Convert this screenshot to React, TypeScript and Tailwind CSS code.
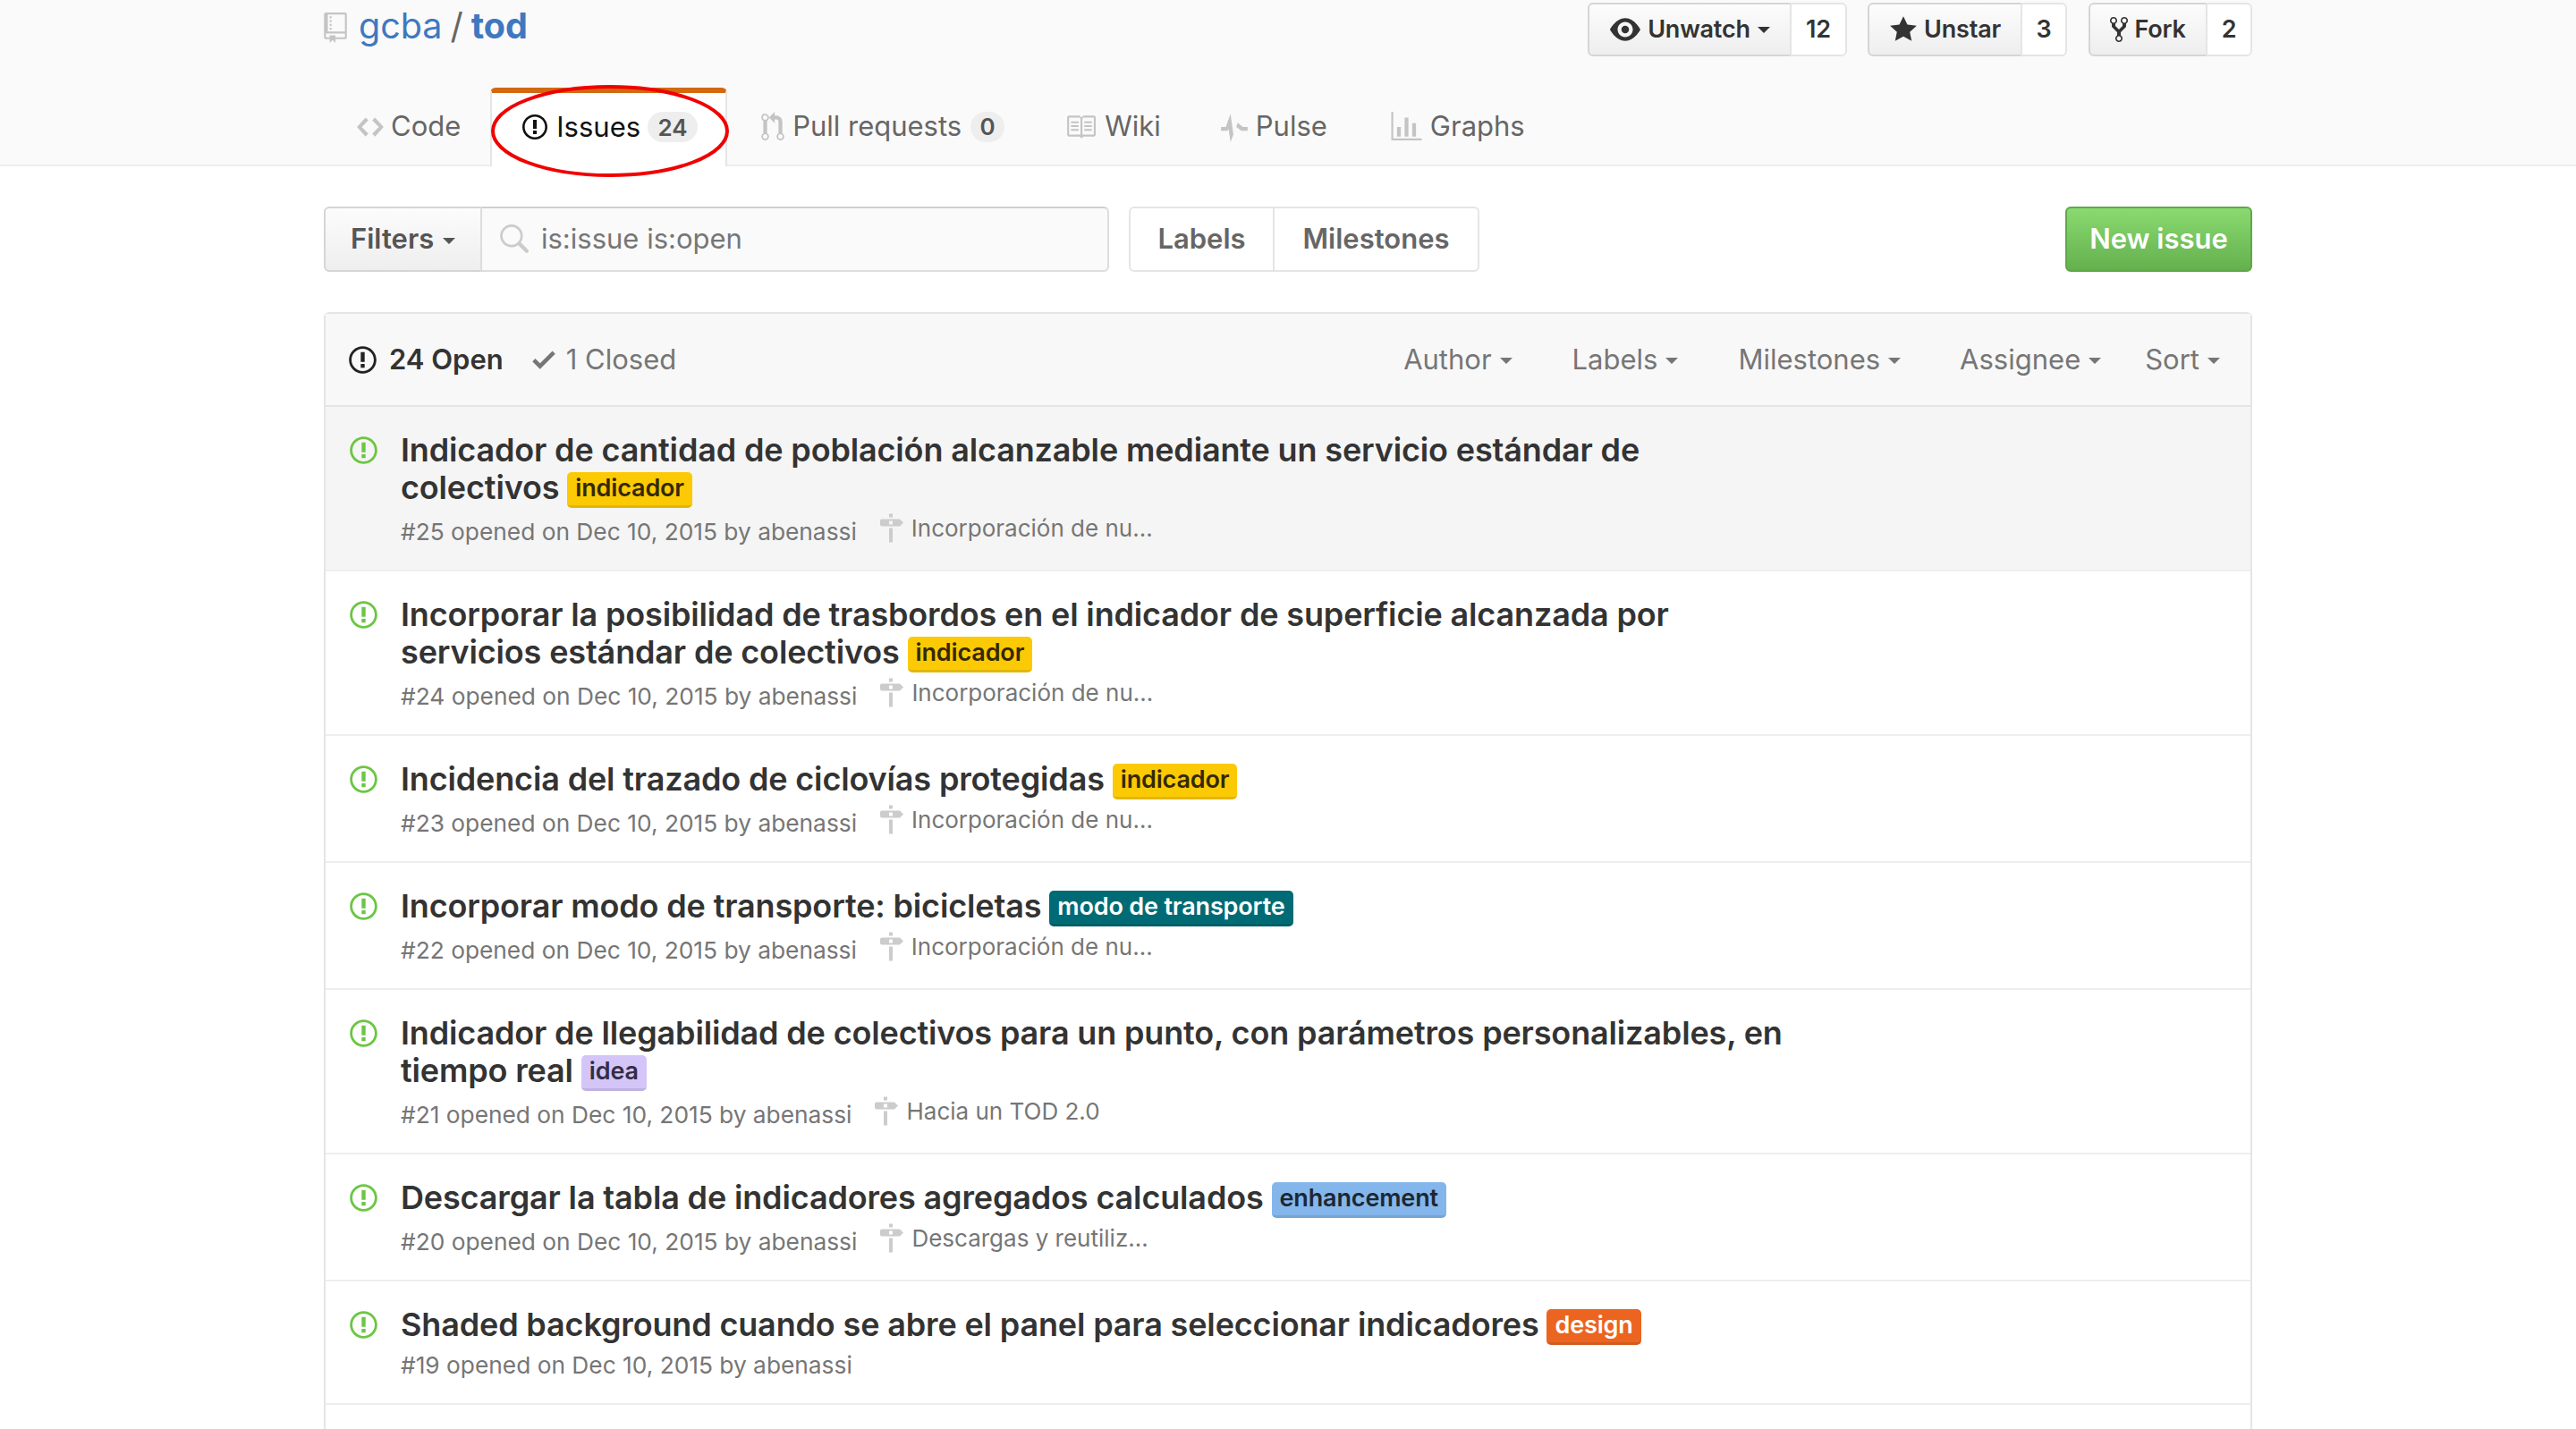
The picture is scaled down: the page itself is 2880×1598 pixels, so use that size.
import React from "react";

const P = {
  issue: "M7 2.3c3.14 0 5.7 2.56 5.7 5.7s-2.56 5.7-5.7 5.7A5.71 5.71 0 0 1 1.3 8c0-3.14 2.56-5.7 5.7-5.7zM7 1C3.14 1 0 4.14 0 8s3.14 7 7 7 7-3.14 7-7-3.14-7-7-7zm1 3H6v5h2V4zm0 6H6v2h2v-2z",
  code: "M9.5 3L8 4.5 11.5 8 8 11.5 9.5 13 14 8 9.5 3zm-5 0L0 8l4.5 5L6 11.5 2.5 8 6 4.5 4.5 3z",
  pr: "M11 11.28V5c-.03-.78-.34-1.47-.94-2.06C9.46 2.35 8.78 2.03 8 2H7V0L4 3l3 3V4h1c.27.02.48.11.69.31.21.2.3.42.31.69v6.28A1.993 1.993 0 0 0 10 15a1.993 1.993 0 0 0 1-3.72zm-1 2.92c-.66 0-1.2-.55-1.2-1.2 0-.65.55-1.2 1.2-1.2.65 0 1.2.55 1.2 1.2 0 .65-.55 1.2-1.2 1.2zM4 3c0-1.11-.89-2-2-2a1.993 1.993 0 0 0-1 3.72v6.56A1.993 1.993 0 0 0 2 15a1.993 1.993 0 0 0 1-3.72V4.72c.59-.34 1-.98 1-1.72zm-.8 10c0 .66-.55 1.2-1.2 1.2-.65 0-1.2-.55-1.2-1.2 0-.65.55-1.2 1.2-1.2.65 0 1.2.55 1.2 1.2zM2 4.2C1.34 4.2.8 3.65.8 3c0-.65.55-1.2 1.2-1.2.65 0 1.2.55 1.2 1.2 0 .65-.55 1.2-1.2 1.2z",
  book: "M3 5h4v1H3V5zm0 3h4V7H3v1zm0 2h4V9H3v1zm11-5h-4v1h4V5zm0 2h-4v1h4V7zm0 2h-4v1h4V9zm2-6v9c0 .55-.45 1-1 1H9.5l-1 1-1-1H2c-.55 0-1-.45-1-1V3c0-.55.45-1 1-1h5.5l1 1 1-1H15c.55 0 1 .45 1 1zm-8 .5L7.5 3H2v9h6V3.5zm7-.5H9.5l-.5.5V12h6V3z",
  repo: "M4 9H3V8h1v1zm0-3H3v1h1V6zm0-2H3v1h1V4zm0-2H3v1h1V2zm8-1v12c0 .55-.45 1-1 1H6v2l-1.5-1.5L3 16v-2H1c-.55 0-1-.45-1-1V1c0-.55.45-1 1-1h10c.55 0 1 .45 1 1zm-1 10H1v2h2v-1h3v1h5v-2zm0-10H2v9h9V1z",
  pulse: "M11.5 8L8.8 5.8 6.5 12 5 1 2.5 8H0v2h3.5l.5-1 1 7 3-8 2.7 2H14V8z",
  graph: "M16 14v1H0V0h1v14h15zM5 13H3V8h2v5zm4 0H7V3h2v10zm4 0h-2V6h2v7z",
  eye: "M8.06 2C3 2 0 8 0 8s3 6 8.06 6C13 14 16 8 16 8s-3-6-7.94-6zM8 12c-2.2 0-4-1.78-4-4 0-2.2 1.8-4 4-4 2.22 0 4 1.8 4 4 0 2.22-1.78 4-4 4zm2-4c0 1.11-.89 2-2 2-1.11 0-2-.89-2-2 0-1.11.89-2 2-2 1.11 0 2 .89 2 2z",
  star: "M14 6l-4.9-.64L7 1 4.9 5.36 0 6l3.6 3.26L2.67 14 7 11.67 11.33 14l-.93-4.74L14 6z",
  fork: "M8 1a1.993 1.993 0 0 0-1 3.72V6L5 8 3 6V4.72A1.993 1.993 0 0 0 2 1a1.993 1.993 0 0 0-1 3.72V6.5l3 3v1.78A1.993 1.993 0 0 0 5 15a1.993 1.993 0 0 0 1-3.72V9.5l3-3V4.72A1.993 1.993 0 0 0 8 1zM2 4.2C1.34 4.2.8 3.65.8 3c0-.65.55-1.2 1.2-1.2.65 0 1.2.55 1.2 1.2 0 .65-.55 1.2-1.2 1.2zm3 10c-.66 0-1.2-.55-1.2-1.2 0-.65.55-1.2 1.2-1.2.65 0 1.2.55 1.2 1.2 0 .65-.55 1.2-1.2 1.2zm3-10c-.66 0-1.2-.55-1.2-1.2 0-.65.55-1.2 1.2-1.2.65 0 1.2.55 1.2 1.2 0 .65-.55 1.2-1.2 1.2z",
  milestone: "M8 2H6V0h2v2zm4 5H2c-.55 0-1-.45-1-1V4c0-.55.45-1 1-1h10l2 2-2 2zM8 4H6v2h2V4zM6 16h2V8H6v8z",
  check: "M12 5l-8 8-4-4 1.5-1.5L4 10l6.5-6.5L12 5z",
  search: "M15.7 13.3l-3.81-3.83A5.93 5.93 0 0 0 13 6c0-3.31-2.69-6-6-6S1 2.69 1 6s2.69 6 6 6c1.3 0 2.48-.41 3.47-1.11l3.83 3.81c.19.2.45.3.7.3.25 0 .52-.09.7-.3a.996.996 0 0 0 0-1.41v.01zM7 10.7c-2.59 0-4.7-2.11-4.7-4.7 0-2.59 2.11-4.7 4.7-4.7 2.59 0 4.7 2.11 4.7 4.7 0 2.59-2.11 4.7-4.7 4.7z",
};

function Oct({ d, vw, cls }: { d: string; vw: number; cls: string }) {
  return (
    <svg viewBox={`0 0 ${vw} 16`} className={cls} fill="currentColor" aria-hidden="true">
      <path fillRule="evenodd" d={d} />
    </svg>
  );
}

function Caret({ cls }: { cls: string }) {
  return <span className={`inline-block w-0 h-0 border-x-[7px] border-x-transparent border-t-[7px] ${cls}`} />;
}

function Social({ icon, vw, iconCls, label, count, caret, w, cw }: { icon: string; vw: number; iconCls: string; label: string; count: string; caret?: boolean; w: string; cw: string }) {
  return (
    <div className="flex h-[60px] text-[27px] font-semibold text-[#333] tracking-[-0.2px]">
      <div className={`flex items-center justify-center gap-[7px] ${w} rounded-l-[6px] border-2 border-[#d5d5d5] bg-gradient-to-b from-[#fcfcfc] to-[#eeeeee]`}>
        <Oct d={icon} vw={vw} cls={iconCls} />
        <span>{label}</span>
        {caret && <Caret cls="border-t-[#333] ml-[1px]" />}
      </div>
      <div className={`flex items-center justify-center ${cw} -ml-[2px] rounded-r-[6px] border-2 border-[#e5e5e5] bg-white`}>{count}</div>
    </div>
  );
}

function Tab({ icon, vw, iconCls, label, count, pad }: { icon: string; vw: number; iconCls: string; label: string; count?: string; pad: string }) {
  return (
    <div className={`flex items-center h-[87px] text-[31px] text-[#666] ${pad}`}>
      <Oct d={icon} vw={vw} cls={`${iconCls} text-[#c4c4c4]`} />
      <span>{label}</span>
      {count && <span className="ml-[10px] flex items-center justify-center h-[34px] min-w-[38px] rounded-full bg-[#eeeeee] text-[#555] text-[26px] font-semibold">{count}</span>}
    </div>
  );
}

function Label({ text, cls }: { text: string; cls: string }) {
  return (
    <span className={`inline-block align-[3px] h-[40px] -my-[4px] leading-[36px] px-[9px] rounded-[5px] text-[27px] font-semibold border-b-[3px] ${cls}`}>{text}</span>
  );
}

type Issue = { lines: string; label: string; labelCls: string; num: string; ms?: string; shade?: boolean };

const yellow = "bg-[#fbca04] border-[#e3b604] text-[#332900]";

const issues: Issue[] = [
  { lines: "Indicador de cantidad de población alcanzable mediante un servicio estándar de colectivos", label: "indicador", labelCls: yellow, num: "#25", ms: "Incorporación de nu…", shade: true },
  { lines: "Incorporar la posibilidad de trasbordos en el indicador de superficie alcanzada por servicios estándar de colectivos", label: "indicador", labelCls: yellow, num: "#24", ms: "Incorporación de nu…" },
  { lines: "Incidencia del trazado de ciclovías protegidas", label: "indicador", labelCls: yellow, num: "#23", ms: "Incorporación de nu…" },
  { lines: "Incorporar modo de transporte: bicicletas", label: "modo de transporte", labelCls: "bg-[#006b75] border-[#005f68] text-white", num: "#22", ms: "Incorporación de nu…" },
  { lines: "Indicador de llegabilidad de colectivos para un punto, con parámetros personalizables, en tiempo real", label: "idea", labelCls: "bg-[#d4c5f9] border-[#bfb1e0] text-[#332e43]", num: "#21", ms: "Hacia un TOD 2.0" },
  { lines: "Descargar la tabla de indicadores agregados calculados", label: "enhancement", labelCls: "bg-[#84b6eb] border-[#76a4d3] text-[#1c2733]", num: "#20", ms: "Descargas y reutiliz…" },
  { lines: "Shaded background cuando se abre el panel para seleccionar indicadores", label: "design", labelCls: "bg-[#eb6420] border-[#d35a1c] text-white", num: "#19" },
];

function Row({ it }: { it: Issue }) {
  return (
    <div className={`flex border-b-2 border-[#eeeeee] pl-[27px] pt-[27px] pb-[22px] ${it.shade ? "bg-[#f5f5f5]" : "bg-white"}`}>
      <div className="w-[57px] shrink-0 pt-[4px]">
        <Oct d={P.issue} vw={14} cls="w-[31px] h-[35px] text-[#6cc644]" />
      </div>
      <div className="w-[1560px]">
        <div className="text-[36px] leading-[42px] font-semibold text-[#333] tracking-[-0.15px]">
          {it.lines} <Label text={it.label} cls={it.labelCls} />
        </div>
        <div className={`flex items-center ${it.ms ? "mt-[9px]" : "mt-[5px]"} text-[26.3px] text-[#767676] h-[40px]`}>
          <span>{it.num} opened on Dec 10, 2015 by abenassi</span>
          {it.ms && (
            <span className="flex items-center ml-[24px] -mt-[9px] text-[26px]">
              <Oct d={P.milestone} vw={14} cls="w-[28px] h-[33px] text-[#cccccc] mr-[9px]" />
              <span>{it.ms}</span>
            </span>
          )}
        </div>
      </div>
    </div>
  );
}

function Sel({ t, cls }: { t: string; cls: string }) {
  return (
    <span className={`flex items-center gap-[9px] ${cls}`}>
      {t}
      <Caret cls="border-t-[#767676] mt-[2px]" />
    </span>
  );
}

export default function App() {
  return (
    <div className="relative h-[1598px] overflow-hidden bg-white" style={{ fontFamily: "Inter, 'Noto Sans', sans-serif" }}>
      <div className="h-[186px] bg-[#fafafa] border-b-2 border-[#eeeeee]">
        <div className="w-[2156px] mx-auto relative">
          <div className="flex justify-between h-[98px]">
            <div className="flex items-center h-[60px] text-[39.5px] text-[#666]">
              <Oct d={P.repo} vw={12} cls="w-[26px] h-[34px] text-[#c4c4c4] mr-[13px] mt-[2px]" />
              <span className="text-[#4078c0]">gcba</span>
              <span className="mx-[9px]">/</span>
              <span className="text-[#4078c0] font-bold">tod</span>
            </div>
            <div className="flex pt-[3px]">
              <Social icon={P.eye} vw={16} iconCls="w-[36px] h-[34px]" label="Unwatch" count="12" caret w="w-[228px]" cw="w-[64px]" />
              <div className="w-[23px]" />
              <Social icon={P.star} vw={14} iconCls="w-[32px] h-[34px]" label="Unstar" count="3" w="w-[173px]" cw="w-[52px]" />
              <div className="w-[24px]" />
              <Social icon={P.fork} vw={10} iconCls="w-[20px] h-[34px]" label="Fork" count="2" w="w-[133px]" cw="w-[52px]" />
            </div>
          </div>
          <div className="flex">
            <Tab icon={P.code} vw={14} iconCls="w-[30px] h-[34px] mr-[8px]" label="Code" pad="pl-[37px] pr-[33px]" />
            <div className="flex items-center h-[88px] pb-[6px] -mb-[2px] pl-[34px] pr-[31px] rounded-t-[6px] border-x-2 border-x-[#e5e5e5] border-t-[6px] border-t-[#d26911] bg-white text-[31px] text-[#333]">
              <Oct d={P.issue} vw={14} cls="w-[28px] h-[32px] text-[#111] mr-[10px]" />
              <span className="text-[#111]">Issues</span>
              <span className="ml-[8px] flex items-center justify-center h-[34px] min-w-[56px] rounded-full bg-[#eeeeee] text-[#555] text-[26px] font-semibold">24</span>
            </div>
            <Tab icon={P.pr} vw={12} iconCls="w-[26px] h-[34px] mr-[9px]" label="Pull requests" count="0" pad="pl-[38px] pr-[32px]" />
            <Tab icon={P.book} vw={16} iconCls="w-[34px] h-[34px] mr-[10px]" label="Wiki" pad="pl-[36px] pr-[31px]" />
            <Tab icon={P.pulse} vw={14} iconCls="w-[32px] h-[34px] mr-[8px]" label="Pulse" pad="pl-[35px] pr-[36px]" />
            <Tab icon={P.graph} vw={16} iconCls="w-[35px] h-[34px] mr-[9px]" label="Graphs" pad="pl-[35px]" />
          </div>
          <svg className="absolute left-[186px] top-[94px] w-[268px] h-[105px]" viewBox="0 0 268 105" fill="none">
            <ellipse cx="134" cy="52.5" rx="131" ry="49.5" stroke="#f00000" strokeWidth="4" />
          </svg>
        </div>
      </div>

      <div className="w-[2156px] mx-auto">
        <div className="flex items-stretch h-[73px] mt-[45px]">
          <div className="flex items-center gap-[10px] w-[177px] pl-[28px] rounded-l-[6px] border-2 border-[#d5d5d5] bg-gradient-to-b from-[#fcfcfc] to-[#eeeeee] text-[31px] font-semibold text-[#555]">
            Filters <Caret cls="border-t-[#555] mt-[3px]" />
          </div>
          <div className="flex items-center w-[703px] -ml-[2px] pl-[18px] rounded-r-[6px] border-2 border-[#dddddd] border-t-[#cfcfcf] bg-[#fafafa] text-[31px] text-[#767676]">
            <Oct d={P.search} vw={16} cls="w-[34px] h-[36px] text-[#cccccc] mr-[14px]" />
            is:issue is:open
          </div>
          <div className="flex ml-[22px] text-[31px] font-semibold text-[#666]">
            <div className="flex items-center justify-center w-[163px] rounded-l-[6px] border-2 border-[#e5e5e5]">Labels</div>
            <div className="flex items-center justify-center w-[231px] -ml-[2px] rounded-r-[6px] border-2 border-[#e5e5e5]">Milestones</div>
          </div>
          <div className="ml-auto flex items-center justify-center w-[209px] rounded-[6px] border-2 border-[#5ea84a] bg-gradient-to-b from-[#8ada70] to-[#64b04e] text-[31px] font-semibold text-white">
            New issue
          </div>
        </div>

        <div className="mt-[45px] rounded-t-[6px] border-x-2 border-t-2 border-[#e5e5e5]">
          <div className="flex items-center h-[104px] bg-[#f8f8f8] border-b-2 border-[#e5e5e5] text-[31px] text-[#767676]">
            <span className="flex items-center ml-[26px] font-semibold text-[#333]">
              <Oct d={P.issue} vw={14} cls="w-[31px] h-[35px] text-[#222] mr-[14px]" />
              24 Open
            </span>
            <span className="flex items-center ml-[32px]">
              <Oct d={P.check} vw={12} cls="w-[26px] h-[34px] text-[#767676] mr-[12px]" />
              1 Closed
            </span>
            <div className="ml-auto flex pr-[34px]">
              <Sel t="Author" cls="mr-[67px]" />
              <Sel t="Labels" cls="mr-[67px]" />
              <Sel t="Milestones" cls="mr-[66px]" />
              <Sel t="Assignee" cls="mr-[49px]" />
              <Sel t="Sort" cls="" />
            </div>
          </div>
          {issues.map((it) => (
            <Row key={it.num} it={it} />
          ))}
          <div className="h-[100px] bg-white" />
        </div>
      </div>
    </div>
  );
}
